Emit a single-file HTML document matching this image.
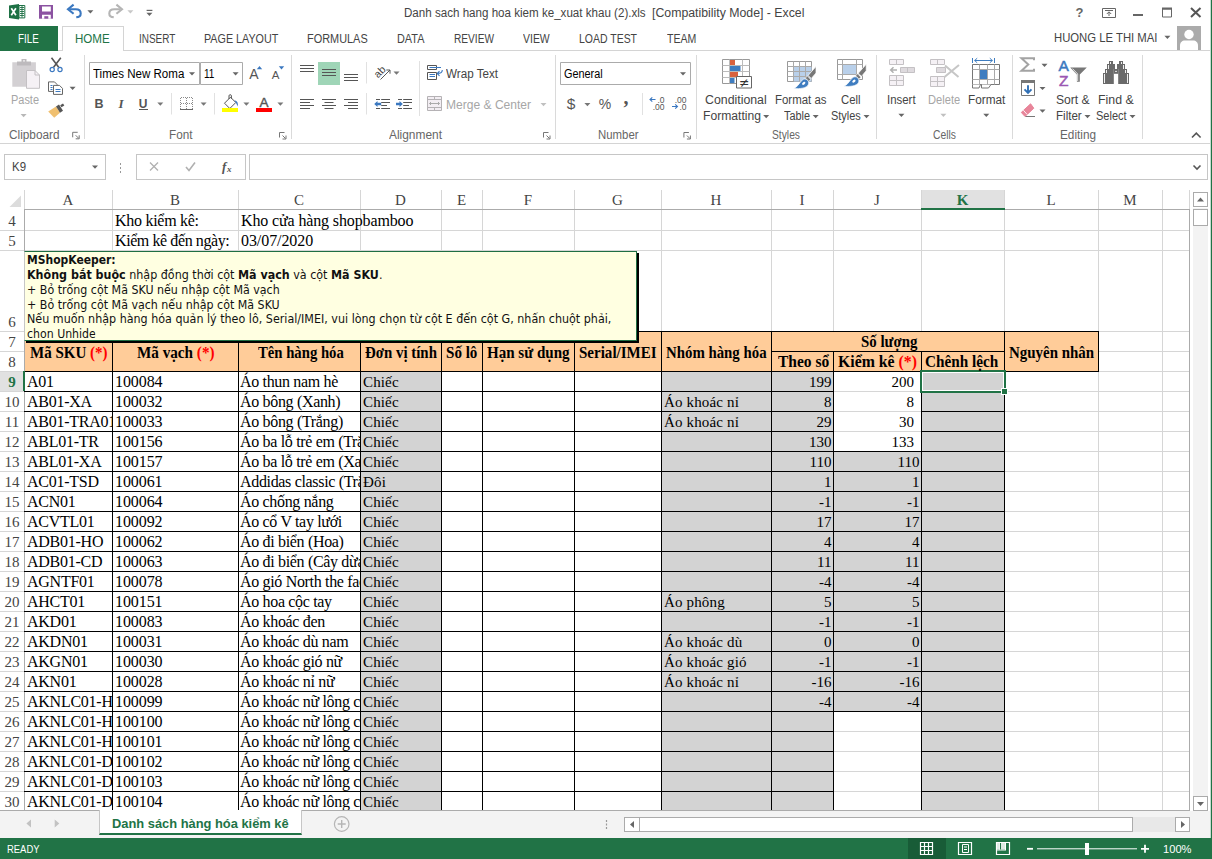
<!DOCTYPE html>
<html><head><meta charset="utf-8">
<style>
*{box-sizing:border-box;margin:0;padding:0}
html,body{width:1212px;height:859px;overflow:hidden;background:#fff}
body{position:relative;font-family:"Liberation Sans",sans-serif;font-size:12px;color:#444}
div,span,svg{position:absolute}
span.i{position:static}
.red{position:static;color:#f00}
b{font-weight:bold}
/* grid */
#grid{left:0;top:0;width:1212px;height:859px}
.ch{font-family:"Liberation Serif",serif;font-size:15px;color:#444;text-align:center;line-height:20px}
.ch.sel{background:#e1e1e1;color:#217346;font-weight:bold}
.rh{font-family:"Liberation Serif",serif;font-size:15px;color:#444;text-align:center;line-height:22px}
.rh.sel{background:#e1e1e1;color:#217346;font-weight:bold}
.vl{width:1px;background:#d6d6d6}
.hl{height:1px;background:#d6d6d6}
.bv{width:1px;background:#000}
.bh{height:1px;background:#000}
.c{font-family:"Liberation Serif",serif;font-size:15px;color:#000;line-height:20px;white-space:nowrap;overflow:hidden}
.c.r{text-align:right}
.c.a{font-size:16px;letter-spacing:-.25px}
.c.b{font-size:16px;letter-spacing:-.08px}
.c.cc{font-size:16px;letter-spacing:-.33px}
.c.n{letter-spacing:.15px}
.c.h{font-weight:bold;text-align:center;line-height:19px}
/* chrome */
.t{white-space:nowrap;transform-origin:0 50%}
.tab{top:27px;height:23px;line-height:24px;font-size:12px;color:#444;white-space:nowrap}
.gl{top:128px;font-size:12px;color:#555;line-height:14px;white-space:nowrap}
.sep{width:1px;background:#e1e1e1;top:55px;height:85px}
.lbl{font-size:12px;color:#444;line-height:14px;text-align:center;white-space:nowrap}
</style></head><body>
<!-- title bar -->
<!-- tabs -->
<div style="left:0;top:50px;width:1211px;height:1px;background:#d4d4d4"></div>
<div style="left:0;top:26px;width:58px;height:25px;background:#217346"></div>
<div style="left:62px;top:26px;width:62px;height:25px;background:#fff;border:1px solid #d4d4d4;border-bottom:none"></div>
<!-- ribbon -->
<div style="left:0;top:143px;width:1211px;height:1px;background:#d4d4d4"></div>
<!-- formula bar -->
<div style="left:4px;top:154px;width:102px;height:26px;border:1px solid #c6c6c6;background:#fff"></div>
<div style="left:136px;top:154px;width:110px;height:26px;border:1px solid #c6c6c6"></div>
<div style="left:249px;top:154px;width:959px;height:26px;border:1px solid #c6c6c6"></div>
<!-- grid -->
<div id="grid">
<div class="ch" style="left:24px;top:190px;width:88px;height:19px;">A</div>
<div class="ch" style="left:112px;top:190px;width:126px;height:19px;">B</div>
<div class="ch" style="left:238px;top:190px;width:122px;height:19px;">C</div>
<div class="ch" style="left:360px;top:190px;width:81px;height:19px;">D</div>
<div class="ch" style="left:441px;top:190px;width:41px;height:19px;">E</div>
<div class="ch" style="left:482px;top:190px;width:92px;height:19px;">F</div>
<div class="ch" style="left:574px;top:190px;width:87px;height:19px;">G</div>
<div class="ch" style="left:661px;top:190px;width:110px;height:19px;">H</div>
<div class="ch" style="left:771px;top:190px;width:62px;height:19px;">I</div>
<div class="ch" style="left:833px;top:190px;width:88px;height:19px;">J</div>
<div class="ch sel" style="left:921px;top:190px;width:83px;height:19px;">K</div>
<div class="ch" style="left:1004px;top:190px;width:94px;height:19px;">L</div>
<div class="ch" style="left:1098px;top:190px;width:64px;height:19px;">M</div>
<div class="rh" style="left:0px;top:210px;width:24px;height:20px;">4</div>
<div class="rh" style="left:0px;top:230px;width:24px;height:20px;">5</div>
<div class="rh" style="left:0;top:250px;width:24px;height:81px;line-height:144px">6</div>
<div class="rh" style="left:0px;top:331px;width:24px;height:20px;">7</div>
<div class="rh" style="left:0px;top:351px;width:24px;height:20px;">8</div>
<div class="rh sel" style="left:0px;top:371px;width:24px;height:20px;">9</div>
<div class="rh" style="left:0px;top:391px;width:24px;height:20px;">10</div>
<div class="rh" style="left:0px;top:411px;width:24px;height:20px;">11</div>
<div class="rh" style="left:0px;top:431px;width:24px;height:20px;">12</div>
<div class="rh" style="left:0px;top:451px;width:24px;height:20px;">13</div>
<div class="rh" style="left:0px;top:471px;width:24px;height:20px;">14</div>
<div class="rh" style="left:0px;top:491px;width:24px;height:20px;">15</div>
<div class="rh" style="left:0px;top:511px;width:24px;height:20px;">16</div>
<div class="rh" style="left:0px;top:531px;width:24px;height:20px;">17</div>
<div class="rh" style="left:0px;top:551px;width:24px;height:20px;">18</div>
<div class="rh" style="left:0px;top:571px;width:24px;height:20px;">19</div>
<div class="rh" style="left:0px;top:591px;width:24px;height:20px;">20</div>
<div class="rh" style="left:0px;top:611px;width:24px;height:20px;">21</div>
<div class="rh" style="left:0px;top:631px;width:24px;height:20px;">22</div>
<div class="rh" style="left:0px;top:651px;width:24px;height:20px;">23</div>
<div class="rh" style="left:0px;top:671px;width:24px;height:20px;">24</div>
<div class="rh" style="left:0px;top:691px;width:24px;height:20px;">25</div>
<div class="rh" style="left:0px;top:711px;width:24px;height:20px;">26</div>
<div class="rh" style="left:0px;top:731px;width:24px;height:20px;">27</div>
<div class="rh" style="left:0px;top:751px;width:24px;height:20px;">28</div>
<div class="rh" style="left:0px;top:771px;width:24px;height:20px;">29</div>
<div class="rh" style="left:0px;top:791px;width:24px;height:20px;">30</div>
<svg width="24" height="20" style="left:0;top:190px"><path d="M21 5.500v11.500h-11.500z" fill="#dcdcdc"/></svg>
<div class="vl" style="left:112px;top:190px;height:621px"></div>
<div class="vl" style="left:238px;top:190px;height:621px"></div>
<div class="vl" style="left:360px;top:190px;height:621px"></div>
<div class="vl" style="left:441px;top:190px;height:621px"></div>
<div class="vl" style="left:482px;top:190px;height:621px"></div>
<div class="vl" style="left:574px;top:190px;height:621px"></div>
<div class="vl" style="left:661px;top:190px;height:621px"></div>
<div class="vl" style="left:771px;top:190px;height:621px"></div>
<div class="vl" style="left:833px;top:190px;height:621px"></div>
<div class="vl" style="left:921px;top:190px;height:621px"></div>
<div class="vl" style="left:1004px;top:190px;height:621px"></div>
<div class="vl" style="left:1098px;top:190px;height:621px"></div>
<div class="vl" style="left:1162px;top:190px;height:621px"></div>
<div class="vl" style="left:1189px;top:190px;height:621px"></div>
<div class="hl" style="left:0;top:230px;width:1189px"></div>
<div class="hl" style="left:0;top:250px;width:1189px"></div>
<div class="hl" style="left:0;top:331px;width:1189px"></div>
<div class="hl" style="left:0;top:351px;width:1189px"></div>
<div class="hl" style="left:0;top:371px;width:1189px"></div>
<div class="hl" style="left:0;top:391px;width:1189px"></div>
<div class="hl" style="left:0;top:411px;width:1189px"></div>
<div class="hl" style="left:0;top:431px;width:1189px"></div>
<div class="hl" style="left:0;top:451px;width:1189px"></div>
<div class="hl" style="left:0;top:471px;width:1189px"></div>
<div class="hl" style="left:0;top:491px;width:1189px"></div>
<div class="hl" style="left:0;top:511px;width:1189px"></div>
<div class="hl" style="left:0;top:531px;width:1189px"></div>
<div class="hl" style="left:0;top:551px;width:1189px"></div>
<div class="hl" style="left:0;top:571px;width:1189px"></div>
<div class="hl" style="left:0;top:591px;width:1189px"></div>
<div class="hl" style="left:0;top:611px;width:1189px"></div>
<div class="hl" style="left:0;top:631px;width:1189px"></div>
<div class="hl" style="left:0;top:651px;width:1189px"></div>
<div class="hl" style="left:0;top:671px;width:1189px"></div>
<div class="hl" style="left:0;top:691px;width:1189px"></div>
<div class="hl" style="left:0;top:711px;width:1189px"></div>
<div class="hl" style="left:0;top:731px;width:1189px"></div>
<div class="hl" style="left:0;top:751px;width:1189px"></div>
<div class="hl" style="left:0;top:771px;width:1189px"></div>
<div class="hl" style="left:0;top:791px;width:1189px"></div>
<div class="hl" style="left:0;top:811px;width:1189px"></div>
<div class="vl" style="left:24px;top:190px;height:20px"></div>
<div class="hl" style="left:24px;top:209px;width:1166px;background:#ababab"></div>
<div class="vl" style="left:24px;top:209px;height:602px;background:#ababab"></div>
<div class="f" style="left:25px;top:332px;width:1073px;height:39px;background:#ffcc99"></div>
<div class="f" style="left:361px;top:372px;width:80px;height:19px;background:#d3d3d3"></div>
<div class="f" style="left:662px;top:372px;width:171px;height:19px;background:#d3d3d3"></div>
<div class="f" style="left:922px;top:372px;width:82px;height:19px;background:#d3d3d3"></div>
<div class="f" style="left:361px;top:392px;width:80px;height:19px;background:#d3d3d3"></div>
<div class="f" style="left:662px;top:392px;width:171px;height:19px;background:#d3d3d3"></div>
<div class="f" style="left:922px;top:392px;width:82px;height:19px;background:#d3d3d3"></div>
<div class="f" style="left:361px;top:412px;width:80px;height:19px;background:#d3d3d3"></div>
<div class="f" style="left:662px;top:412px;width:171px;height:19px;background:#d3d3d3"></div>
<div class="f" style="left:922px;top:412px;width:82px;height:19px;background:#d3d3d3"></div>
<div class="f" style="left:361px;top:432px;width:80px;height:19px;background:#d3d3d3"></div>
<div class="f" style="left:662px;top:432px;width:171px;height:19px;background:#d3d3d3"></div>
<div class="f" style="left:922px;top:432px;width:82px;height:19px;background:#d3d3d3"></div>
<div class="f" style="left:361px;top:452px;width:80px;height:19px;background:#d3d3d3"></div>
<div class="f" style="left:662px;top:452px;width:171px;height:19px;background:#d3d3d3"></div>
<div class="f" style="left:922px;top:452px;width:82px;height:19px;background:#d3d3d3"></div>
<div class="f" style="left:834px;top:452px;width:87px;height:19px;background:#d3d3d3"></div>
<div class="f" style="left:361px;top:472px;width:80px;height:19px;background:#d3d3d3"></div>
<div class="f" style="left:662px;top:472px;width:171px;height:19px;background:#d3d3d3"></div>
<div class="f" style="left:922px;top:472px;width:82px;height:19px;background:#d3d3d3"></div>
<div class="f" style="left:834px;top:472px;width:87px;height:19px;background:#d3d3d3"></div>
<div class="f" style="left:361px;top:492px;width:80px;height:19px;background:#d3d3d3"></div>
<div class="f" style="left:662px;top:492px;width:171px;height:19px;background:#d3d3d3"></div>
<div class="f" style="left:922px;top:492px;width:82px;height:19px;background:#d3d3d3"></div>
<div class="f" style="left:834px;top:492px;width:87px;height:19px;background:#d3d3d3"></div>
<div class="f" style="left:361px;top:512px;width:80px;height:19px;background:#d3d3d3"></div>
<div class="f" style="left:662px;top:512px;width:171px;height:19px;background:#d3d3d3"></div>
<div class="f" style="left:922px;top:512px;width:82px;height:19px;background:#d3d3d3"></div>
<div class="f" style="left:834px;top:512px;width:87px;height:19px;background:#d3d3d3"></div>
<div class="f" style="left:361px;top:532px;width:80px;height:19px;background:#d3d3d3"></div>
<div class="f" style="left:662px;top:532px;width:171px;height:19px;background:#d3d3d3"></div>
<div class="f" style="left:922px;top:532px;width:82px;height:19px;background:#d3d3d3"></div>
<div class="f" style="left:834px;top:532px;width:87px;height:19px;background:#d3d3d3"></div>
<div class="f" style="left:361px;top:552px;width:80px;height:19px;background:#d3d3d3"></div>
<div class="f" style="left:662px;top:552px;width:171px;height:19px;background:#d3d3d3"></div>
<div class="f" style="left:922px;top:552px;width:82px;height:19px;background:#d3d3d3"></div>
<div class="f" style="left:834px;top:552px;width:87px;height:19px;background:#d3d3d3"></div>
<div class="f" style="left:361px;top:572px;width:80px;height:19px;background:#d3d3d3"></div>
<div class="f" style="left:662px;top:572px;width:171px;height:19px;background:#d3d3d3"></div>
<div class="f" style="left:922px;top:572px;width:82px;height:19px;background:#d3d3d3"></div>
<div class="f" style="left:834px;top:572px;width:87px;height:19px;background:#d3d3d3"></div>
<div class="f" style="left:361px;top:592px;width:80px;height:19px;background:#d3d3d3"></div>
<div class="f" style="left:662px;top:592px;width:171px;height:19px;background:#d3d3d3"></div>
<div class="f" style="left:922px;top:592px;width:82px;height:19px;background:#d3d3d3"></div>
<div class="f" style="left:834px;top:592px;width:87px;height:19px;background:#d3d3d3"></div>
<div class="f" style="left:361px;top:612px;width:80px;height:19px;background:#d3d3d3"></div>
<div class="f" style="left:662px;top:612px;width:171px;height:19px;background:#d3d3d3"></div>
<div class="f" style="left:922px;top:612px;width:82px;height:19px;background:#d3d3d3"></div>
<div class="f" style="left:834px;top:612px;width:87px;height:19px;background:#d3d3d3"></div>
<div class="f" style="left:361px;top:632px;width:80px;height:19px;background:#d3d3d3"></div>
<div class="f" style="left:662px;top:632px;width:171px;height:19px;background:#d3d3d3"></div>
<div class="f" style="left:922px;top:632px;width:82px;height:19px;background:#d3d3d3"></div>
<div class="f" style="left:834px;top:632px;width:87px;height:19px;background:#d3d3d3"></div>
<div class="f" style="left:361px;top:652px;width:80px;height:19px;background:#d3d3d3"></div>
<div class="f" style="left:662px;top:652px;width:171px;height:19px;background:#d3d3d3"></div>
<div class="f" style="left:922px;top:652px;width:82px;height:19px;background:#d3d3d3"></div>
<div class="f" style="left:834px;top:652px;width:87px;height:19px;background:#d3d3d3"></div>
<div class="f" style="left:361px;top:672px;width:80px;height:19px;background:#d3d3d3"></div>
<div class="f" style="left:662px;top:672px;width:171px;height:19px;background:#d3d3d3"></div>
<div class="f" style="left:922px;top:672px;width:82px;height:19px;background:#d3d3d3"></div>
<div class="f" style="left:834px;top:672px;width:87px;height:19px;background:#d3d3d3"></div>
<div class="f" style="left:361px;top:692px;width:80px;height:19px;background:#d3d3d3"></div>
<div class="f" style="left:662px;top:692px;width:171px;height:19px;background:#d3d3d3"></div>
<div class="f" style="left:922px;top:692px;width:82px;height:19px;background:#d3d3d3"></div>
<div class="f" style="left:834px;top:692px;width:87px;height:19px;background:#d3d3d3"></div>
<div class="f" style="left:361px;top:712px;width:80px;height:19px;background:#d3d3d3"></div>
<div class="f" style="left:662px;top:712px;width:171px;height:19px;background:#d3d3d3"></div>
<div class="f" style="left:922px;top:712px;width:82px;height:19px;background:#d3d3d3"></div>
<div class="f" style="left:361px;top:732px;width:80px;height:19px;background:#d3d3d3"></div>
<div class="f" style="left:662px;top:732px;width:171px;height:19px;background:#d3d3d3"></div>
<div class="f" style="left:922px;top:732px;width:82px;height:19px;background:#d3d3d3"></div>
<div class="f" style="left:361px;top:752px;width:80px;height:19px;background:#d3d3d3"></div>
<div class="f" style="left:662px;top:752px;width:171px;height:19px;background:#d3d3d3"></div>
<div class="f" style="left:922px;top:752px;width:82px;height:19px;background:#d3d3d3"></div>
<div class="f" style="left:361px;top:772px;width:80px;height:19px;background:#d3d3d3"></div>
<div class="f" style="left:662px;top:772px;width:171px;height:19px;background:#d3d3d3"></div>
<div class="f" style="left:922px;top:772px;width:82px;height:19px;background:#d3d3d3"></div>
<div class="f" style="left:361px;top:792px;width:80px;height:19px;background:#d3d3d3"></div>
<div class="f" style="left:662px;top:792px;width:171px;height:19px;background:#d3d3d3"></div>
<div class="f" style="left:922px;top:792px;width:82px;height:19px;background:#d3d3d3"></div>
<div class="bh" style="left:24px;top:331px;width:1075px"></div>
<div class="bh" style="left:24px;top:371px;width:1075px"></div>
<div class="bv" style="left:112px;top:331px;height:40px"></div>
<div class="bv" style="left:238px;top:331px;height:40px"></div>
<div class="bv" style="left:360px;top:331px;height:40px"></div>
<div class="bv" style="left:441px;top:331px;height:40px"></div>
<div class="bv" style="left:482px;top:331px;height:40px"></div>
<div class="bv" style="left:574px;top:331px;height:40px"></div>
<div class="bv" style="left:661px;top:331px;height:40px"></div>
<div class="bv" style="left:771px;top:331px;height:40px"></div>
<div class="bv" style="left:1004px;top:331px;height:40px"></div>
<div class="bv" style="left:1098px;top:331px;height:40px"></div>
<div class="bv" style="left:833px;top:351px;height:20px"></div>
<div class="bv" style="left:921px;top:351px;height:20px"></div>
<div class="bh" style="left:771px;top:351px;width:233px"></div>
<div class="bv" style="left:112px;top:371px;height:440px"></div>
<div class="bv" style="left:238px;top:371px;height:440px"></div>
<div class="bv" style="left:360px;top:371px;height:440px"></div>
<div class="bv" style="left:441px;top:371px;height:440px"></div>
<div class="bv" style="left:482px;top:371px;height:440px"></div>
<div class="bv" style="left:574px;top:371px;height:440px"></div>
<div class="bv" style="left:661px;top:371px;height:440px"></div>
<div class="bv" style="left:771px;top:371px;height:440px"></div>
<div class="bv" style="left:833px;top:371px;height:440px"></div>
<div class="bv" style="left:921px;top:371px;height:440px"></div>
<div class="bv" style="left:1004px;top:371px;height:440px"></div>
<div class="bh" style="left:24px;top:391px;width:810px"></div>
<div class="bh" style="left:921px;top:391px;width:84px"></div>
<div class="bh" style="left:24px;top:411px;width:810px"></div>
<div class="bh" style="left:921px;top:411px;width:84px"></div>
<div class="bh" style="left:24px;top:431px;width:810px"></div>
<div class="bh" style="left:921px;top:431px;width:84px"></div>
<div class="bh" style="left:24px;top:451px;width:981px"></div>
<div class="bh" style="left:24px;top:471px;width:981px"></div>
<div class="bh" style="left:24px;top:491px;width:981px"></div>
<div class="bh" style="left:24px;top:511px;width:981px"></div>
<div class="bh" style="left:24px;top:531px;width:981px"></div>
<div class="bh" style="left:24px;top:551px;width:981px"></div>
<div class="bh" style="left:24px;top:571px;width:981px"></div>
<div class="bh" style="left:24px;top:591px;width:981px"></div>
<div class="bh" style="left:24px;top:611px;width:981px"></div>
<div class="bh" style="left:24px;top:631px;width:981px"></div>
<div class="bh" style="left:24px;top:651px;width:981px"></div>
<div class="bh" style="left:24px;top:671px;width:981px"></div>
<div class="bh" style="left:24px;top:691px;width:981px"></div>
<div class="bh" style="left:24px;top:711px;width:981px"></div>
<div class="bh" style="left:24px;top:731px;width:810px"></div>
<div class="bh" style="left:921px;top:731px;width:84px"></div>
<div class="bh" style="left:24px;top:751px;width:810px"></div>
<div class="bh" style="left:921px;top:751px;width:84px"></div>
<div class="bh" style="left:24px;top:771px;width:810px"></div>
<div class="bh" style="left:921px;top:771px;width:84px"></div>
<div class="bh" style="left:24px;top:791px;width:810px"></div>
<div class="bh" style="left:921px;top:791px;width:84px"></div>
<div class="bh" style="left:24px;top:811px;width:810px"></div>
<div class="bh" style="left:921px;top:811px;width:84px"></div>
<div style="left:23px;top:371px;width:2px;height:20px;background:#217346"></div>
<div style="left:921px;top:208px;width:84px;height:2px;background:#217346"></div>
<div class="c b" style="left:115px;top:211px;width:245px;height:19px;letter-spacing:-.28px">Kho kiểm kê:</div>
<div class="c b" style="left:241px;top:211px;width:359px;height:19px;letter-spacing:-.13px">Kho cửa hàng shopbamboo</div>
<div class="c b" style="left:115px;top:231px;width:245px;height:19px;letter-spacing:-.41px">Kiểm kê đến ngày:</div>
<div class="c b" style="left:241px;top:231px;width:119px;height:19px;">03/07/2020</div>
<div class="c a" style="left:27px;top:372px;width:85px;height:19px;">A01</div>
<div class="c b" style="left:115px;top:372px;width:123px;height:19px;">100084</div>
<div class="c cc" style="left:240px;top:372px;width:120px;height:19px;">Áo thun nam hè</div>
<div class="c n" style="left:363px;top:372px;width:78px;height:19px;">Chiếc</div>
<div class="c r" style="left:772px;top:372px;width:59.5px;height:19px;">199</div>
<div class="c r" style="left:834px;top:372px;width:80px;height:19px;">200</div>
<div class="c a" style="left:27px;top:392px;width:85px;height:19px;">AB01-XA</div>
<div class="c b" style="left:115px;top:392px;width:123px;height:19px;">100032</div>
<div class="c cc" style="left:240px;top:392px;width:120px;height:19px;">Áo bông (Xanh)</div>
<div class="c n" style="left:363px;top:392px;width:78px;height:19px;">Chiếc</div>
<div class="c n" style="left:664px;top:392px;width:107px;height:19px;">Áo khoác nỉ</div>
<div class="c r" style="left:772px;top:392px;width:59.5px;height:19px;">8</div>
<div class="c r" style="left:834px;top:392px;width:80px;height:19px;">8</div>
<div class="c a" style="left:27px;top:412px;width:85px;height:19px;">AB01-TRA01</div>
<div class="c b" style="left:115px;top:412px;width:123px;height:19px;">100033</div>
<div class="c cc" style="left:240px;top:412px;width:120px;height:19px;">Áo bông (Trắng)</div>
<div class="c n" style="left:363px;top:412px;width:78px;height:19px;">Chiếc</div>
<div class="c n" style="left:664px;top:412px;width:107px;height:19px;">Áo khoác nỉ</div>
<div class="c r" style="left:772px;top:412px;width:59.5px;height:19px;">29</div>
<div class="c r" style="left:834px;top:412px;width:80px;height:19px;">30</div>
<div class="c a" style="left:27px;top:432px;width:85px;height:19px;">ABL01-TR</div>
<div class="c b" style="left:115px;top:432px;width:123px;height:19px;">100156</div>
<div class="c cc" style="left:240px;top:432px;width:120px;height:19px;">Áo ba lỗ trẻ em (Trắng)</div>
<div class="c n" style="left:363px;top:432px;width:78px;height:19px;">Chiếc</div>
<div class="c r" style="left:772px;top:432px;width:59.5px;height:19px;">130</div>
<div class="c r" style="left:834px;top:432px;width:80px;height:19px;">133</div>
<div class="c a" style="left:27px;top:452px;width:85px;height:19px;">ABL01-XA</div>
<div class="c b" style="left:115px;top:452px;width:123px;height:19px;">100157</div>
<div class="c cc" style="left:240px;top:452px;width:120px;height:19px;">Áo ba lỗ trẻ em (Xanh)</div>
<div class="c n" style="left:363px;top:452px;width:78px;height:19px;">Chiếc</div>
<div class="c r" style="left:772px;top:452px;width:59.5px;height:19px;">110</div>
<div class="c r" style="left:834px;top:452px;width:85.5px;height:19px;">110</div>
<div class="c a" style="left:27px;top:472px;width:85px;height:19px;">AC01-TSD</div>
<div class="c b" style="left:115px;top:472px;width:123px;height:19px;">100061</div>
<div class="c cc" style="left:240px;top:472px;width:120px;height:19px;">Addidas classic (Trắng)</div>
<div class="c n" style="left:363px;top:472px;width:78px;height:19px;">Đôi</div>
<div class="c r" style="left:772px;top:472px;width:59.5px;height:19px;">1</div>
<div class="c r" style="left:834px;top:472px;width:85.5px;height:19px;">1</div>
<div class="c a" style="left:27px;top:492px;width:85px;height:19px;">ACN01</div>
<div class="c b" style="left:115px;top:492px;width:123px;height:19px;">100064</div>
<div class="c cc" style="left:240px;top:492px;width:120px;height:19px;">Áo chống nắng</div>
<div class="c n" style="left:363px;top:492px;width:78px;height:19px;">Chiếc</div>
<div class="c r" style="left:772px;top:492px;width:59.5px;height:19px;">-1</div>
<div class="c r" style="left:834px;top:492px;width:85.5px;height:19px;">-1</div>
<div class="c a" style="left:27px;top:512px;width:85px;height:19px;">ACVTL01</div>
<div class="c b" style="left:115px;top:512px;width:123px;height:19px;">100092</div>
<div class="c cc" style="left:240px;top:512px;width:120px;height:19px;">Áo cổ V tay lưới</div>
<div class="c n" style="left:363px;top:512px;width:78px;height:19px;">Chiếc</div>
<div class="c r" style="left:772px;top:512px;width:59.5px;height:19px;">17</div>
<div class="c r" style="left:834px;top:512px;width:85.5px;height:19px;">17</div>
<div class="c a" style="left:27px;top:532px;width:85px;height:19px;">ADB01-HO</div>
<div class="c b" style="left:115px;top:532px;width:123px;height:19px;">100062</div>
<div class="c cc" style="left:240px;top:532px;width:120px;height:19px;">Áo đi biển (Hoa)</div>
<div class="c n" style="left:363px;top:532px;width:78px;height:19px;">Chiếc</div>
<div class="c r" style="left:772px;top:532px;width:59.5px;height:19px;">4</div>
<div class="c r" style="left:834px;top:532px;width:85.5px;height:19px;">4</div>
<div class="c a" style="left:27px;top:552px;width:85px;height:19px;">ADB01-CD</div>
<div class="c b" style="left:115px;top:552px;width:123px;height:19px;">100063</div>
<div class="c cc" style="left:240px;top:552px;width:120px;height:19px;">Áo đi biển (Cây dừa)</div>
<div class="c n" style="left:363px;top:552px;width:78px;height:19px;">Chiếc</div>
<div class="c r" style="left:772px;top:552px;width:59.5px;height:19px;">11</div>
<div class="c r" style="left:834px;top:552px;width:85.5px;height:19px;">11</div>
<div class="c a" style="left:27px;top:572px;width:85px;height:19px;">AGNTF01</div>
<div class="c b" style="left:115px;top:572px;width:123px;height:19px;">100078</div>
<div class="c cc" style="left:240px;top:572px;width:120px;height:19px;">Áo gió North the face</div>
<div class="c n" style="left:363px;top:572px;width:78px;height:19px;">Chiếc</div>
<div class="c r" style="left:772px;top:572px;width:59.5px;height:19px;">-4</div>
<div class="c r" style="left:834px;top:572px;width:85.5px;height:19px;">-4</div>
<div class="c a" style="left:27px;top:592px;width:85px;height:19px;">AHCT01</div>
<div class="c b" style="left:115px;top:592px;width:123px;height:19px;">100151</div>
<div class="c cc" style="left:240px;top:592px;width:120px;height:19px;">Áo hoa cộc tay</div>
<div class="c n" style="left:363px;top:592px;width:78px;height:19px;">Chiếc</div>
<div class="c n" style="left:664px;top:592px;width:107px;height:19px;">Áo phông</div>
<div class="c r" style="left:772px;top:592px;width:59.5px;height:19px;">5</div>
<div class="c r" style="left:834px;top:592px;width:85.5px;height:19px;">5</div>
<div class="c a" style="left:27px;top:612px;width:85px;height:19px;">AKD01</div>
<div class="c b" style="left:115px;top:612px;width:123px;height:19px;">100083</div>
<div class="c cc" style="left:240px;top:612px;width:120px;height:19px;">Áo khoác đen</div>
<div class="c n" style="left:363px;top:612px;width:78px;height:19px;">Chiếc</div>
<div class="c r" style="left:772px;top:612px;width:59.5px;height:19px;">-1</div>
<div class="c r" style="left:834px;top:612px;width:85.5px;height:19px;">-1</div>
<div class="c a" style="left:27px;top:632px;width:85px;height:19px;">AKDN01</div>
<div class="c b" style="left:115px;top:632px;width:123px;height:19px;">100031</div>
<div class="c cc" style="left:240px;top:632px;width:120px;height:19px;">Áo khoác dù nam</div>
<div class="c n" style="left:363px;top:632px;width:78px;height:19px;">Chiếc</div>
<div class="c n" style="left:664px;top:632px;width:107px;height:19px;">Áo khoác dù</div>
<div class="c r" style="left:772px;top:632px;width:59.5px;height:19px;">0</div>
<div class="c r" style="left:834px;top:632px;width:85.5px;height:19px;">0</div>
<div class="c a" style="left:27px;top:652px;width:85px;height:19px;">AKGN01</div>
<div class="c b" style="left:115px;top:652px;width:123px;height:19px;">100030</div>
<div class="c cc" style="left:240px;top:652px;width:120px;height:19px;">Áo khoác gió nữ</div>
<div class="c n" style="left:363px;top:652px;width:78px;height:19px;">Chiếc</div>
<div class="c n" style="left:664px;top:652px;width:107px;height:19px;">Áo khoác gió</div>
<div class="c r" style="left:772px;top:652px;width:59.5px;height:19px;">-1</div>
<div class="c r" style="left:834px;top:652px;width:85.5px;height:19px;">-1</div>
<div class="c a" style="left:27px;top:672px;width:85px;height:19px;">AKN01</div>
<div class="c b" style="left:115px;top:672px;width:123px;height:19px;">100028</div>
<div class="c cc" style="left:240px;top:672px;width:120px;height:19px;">Áo khoác nỉ nữ</div>
<div class="c n" style="left:363px;top:672px;width:78px;height:19px;">Chiếc</div>
<div class="c n" style="left:664px;top:672px;width:107px;height:19px;">Áo khoác nỉ</div>
<div class="c r" style="left:772px;top:672px;width:59.5px;height:19px;">-16</div>
<div class="c r" style="left:834px;top:672px;width:85.5px;height:19px;">-16</div>
<div class="c a" style="left:27px;top:692px;width:85px;height:19px;">AKNLC01-HO</div>
<div class="c b" style="left:115px;top:692px;width:123px;height:19px;">100099</div>
<div class="c cc" style="left:240px;top:692px;width:120px;height:19px;">Áo khoác nữ lông cừu</div>
<div class="c n" style="left:363px;top:692px;width:78px;height:19px;">Chiếc</div>
<div class="c r" style="left:772px;top:692px;width:59.5px;height:19px;">-4</div>
<div class="c r" style="left:834px;top:692px;width:85.5px;height:19px;">-4</div>
<div class="c a" style="left:27px;top:712px;width:85px;height:19px;">AKNLC01-HO</div>
<div class="c b" style="left:115px;top:712px;width:123px;height:19px;">100100</div>
<div class="c cc" style="left:240px;top:712px;width:120px;height:19px;">Áo khoác nữ lông cừu</div>
<div class="c n" style="left:363px;top:712px;width:78px;height:19px;">Chiếc</div>
<div class="c a" style="left:27px;top:732px;width:85px;height:19px;">AKNLC01-HO</div>
<div class="c b" style="left:115px;top:732px;width:123px;height:19px;">100101</div>
<div class="c cc" style="left:240px;top:732px;width:120px;height:19px;">Áo khoác nữ lông cừu</div>
<div class="c n" style="left:363px;top:732px;width:78px;height:19px;">Chiếc</div>
<div class="c a" style="left:27px;top:752px;width:85px;height:19px;">AKNLC01-DO</div>
<div class="c b" style="left:115px;top:752px;width:123px;height:19px;">100102</div>
<div class="c cc" style="left:240px;top:752px;width:120px;height:19px;">Áo khoác nữ lông cừu</div>
<div class="c n" style="left:363px;top:752px;width:78px;height:19px;">Chiếc</div>
<div class="c a" style="left:27px;top:772px;width:85px;height:19px;">AKNLC01-DO</div>
<div class="c b" style="left:115px;top:772px;width:123px;height:19px;">100103</div>
<div class="c cc" style="left:240px;top:772px;width:120px;height:19px;">Áo khoác nữ lông cừu</div>
<div class="c n" style="left:363px;top:772px;width:78px;height:19px;">Chiếc</div>
<div class="c a" style="left:27px;top:792px;width:85px;height:19px;">AKNLC01-DO</div>
<div class="c b" style="left:115px;top:792px;width:123px;height:19px;">100104</div>
<div class="c cc" style="left:240px;top:792px;width:120px;height:19px;">Áo khoác nữ lông cừu</div>
<div class="c n" style="left:363px;top:792px;width:78px;height:19px;">Chiếc</div>
</div>
<!-- sheet tabs -->
<div style="left:0;top:810px;width:1211px;height:28px;background:#f3f3f3"></div>
<div style="left:0;top:810px;width:1190px;height:1px;background:#ababab"></div>
<div style="left:99px;top:810px;width:203px;height:25px;background:#fff;border-left:1px solid #c6c6c6;border-right:1px solid #c6c6c6;border-bottom:2px solid #217346"></div>
<!-- status bar -->
<div style="left:0;top:838px;width:1212px;height:21px;background:#217346"></div>
<!-- comment box -->
<div style="left:24px;top:251px;width:613px;height:90px;background:#ffffe1;border:1px solid #1f6e43;border-left-color:#c6c6c6;box-shadow:2px 2px 0 0 #000"></div>
<!--CMTEXT-->
<!-- selection K9 -->
<div style="left:920px;top:370px;width:86px;height:23px;border:2px solid #217346;box-shadow:inset 0 0 0 1px #fff"></div>
<div style="left:1001px;top:388px;width:7px;height:7px;background:#217346;border:1px solid #fff"></div>
<!-- vertical scrollbar -->
<div style="left:1189px;top:209px;width:1px;height:602px;background:#ababab"></div>
<div style="left:1190px;top:186px;width:21px;height:625px;background:#fff"></div>
<div style="left:1193px;top:208px;width:15px;height:589px;background:#f3f3f3"></div>
<div style="left:1193px;top:192px;width:15px;height:15px;background:#fff;border:1px solid #ababab"></div>
<div style="left:1193px;top:209px;width:15px;height:17px;background:#fff;border:1px solid #ababab"></div>
<div style="left:1193px;top:796px;width:15px;height:15px;background:#fff;border:1px solid #ababab"></div>
<svg width="15" height="15" style="left:1193px;top:192px"><path d="M4 9.500h7l-3.500-4z" fill="#666"/></svg>
<svg width="15" height="15" style="left:1193px;top:796px"><path d="M4 6h7l-3.500 4z" fill="#666"/></svg>
<!-- sheet tab nav -->
<svg width="400" height="27" style="left:0;top:811px"><path d="M31 8.500v8l-4.600-4zM54.700 8.500v8l4.600-4z" fill="#c2c2c2"/><circle cx="341.700" cy="13" r="7.300" fill="none" stroke="#b5b5b5" stroke-width="1.200"/><path d="M337.700 13h8M341.700 9v8" stroke="#b5b5b5" stroke-width="1.400"/></svg>
<!-- horizontal scrollbar -->
<svg width="20" height="27" style="left:600px;top:811px"><path d="M6.500 9v2M6.500 12.500v2M6.500 16v2" stroke="#999" stroke-width="1.200"/></svg>
<div style="left:624px;top:817px;width:566px;height:15px;background:#e8e8e8"></div>
<div style="left:624px;top:817px;width:16px;height:15px;background:#fff;border:1px solid #ababab"></div>
<div style="left:639px;top:817px;width:494px;height:15px;background:#fff;border:1px solid #ababab"></div>
<div style="left:1175px;top:817px;width:15px;height:15px;background:#fff;border:1px solid #ababab"></div>
<svg width="16" height="15" style="left:624px;top:817px"><path d="M10 4v7l-4-3.500z" fill="#666"/></svg>
<svg width="15" height="15" style="left:1175px;top:817px"><path d="M6 4v7l4-3.500z" fill="#666"/></svg>
<!-- status bar icons -->
<div style="left:908px;top:838px;width:38px;height:21px;background:#185c37"></div>
<svg width="260" height="21" style="left:900px;top:838px">
<g stroke="#fff" fill="none">
<path d="M20.500 4.500h12v12h-12zM24.500 4.500v12M28.500 4.500v12M20.500 8.500h12M20.500 12.500h12" stroke-width="1.200"/>
<path d="M58.500 4.500h13v12h-13z" stroke-width="1.200"/><path d="M62.500 6.500h6v8h-6zM64 9h3M64 11.500h3" stroke-width="1"/>
<path d="M96.500 4.500h13v12h-13z" stroke-width="1.200"/><path d="M100 5v7M105.500 5v7M97 12h9" stroke-width="1"/>
<path d="M127 10.800h6" stroke-width="1.800"/><path d="M137 10.800h100" stroke-width="1"/><path d="M241 10.800h8M245 6.800v8" stroke-width="1.800"/>
</g>
<path d="M97 5h8.500v6.500h-8.500z" fill="#fff" opacity="0.850"/><path d="M100.500 5v6.500" stroke="#217346"/>
<path d="M185 5h4v12h-4z" fill="#fff"/>
</svg>

<svg width="1212" height="190" viewBox="0 0 1212 190" style="left:0;top:0"><path d="M9 5.6L19 4v15.6L9 18z" fill="#1e7145"/>
<path d="M19 5.5h5.8v12.4H19z" fill="#fff" stroke="#1e7145" stroke-width="1"/>
<path d="M20 7.5h4M20 9.5h4M20 11.5h4M20 13.5h4M20 15.5h4M22 6v11.5" stroke="#1e7145" stroke-width="0.9" fill="none"/>
<path d="M11.3 8.3l4.6 7M15.9 8.3l-4.6 7" stroke="#fff" stroke-width="1.7" fill="none"/>
<path d="M39 5h14v13.7H39z" fill="#8b52a1"/>
<path d="M42 6.4h8.8v5.2H42zM42 14.8h8.8v3.9H42z" fill="#fff"/>
<path d="M44.3 16.2h4v2.5h-4z" fill="#8b52a1"/>
<path d="M69.5 9.2h6.2c3 0 5 1.7 5 4.2 0 2.3-1.8 3.7-4.4 3.7" fill="none" stroke="#3b78c0" stroke-width="2.1"/>
<path d="M73.6 4.6l-5.6 4.6 5.6 4.6" fill="none" stroke="#3b78c0" stroke-width="2.1"/>
<path d="M87.4 10.3h6l-3 3.2z" fill="#666"/>
<path d="M120.5 9.2h-6.2c-3 0-5 1.7-5 4.2 0 2.3 1.8 3.7 4.4 3.7" fill="none" stroke="#b5b5b5" stroke-width="2.1"/>
<path d="M116.4 4.6l5.6 4.6-5.6 4.6" fill="none" stroke="#b5b5b5" stroke-width="2.1"/>
<path d="M127.4 10.3h6l-3 3.2z" fill="#c8c8c8"/>
<path d="M146.6 10.4H152.4" stroke="#666" stroke-width="1.2"/>
<path d="M146.4 12.8h6l-3 3.2z" fill="#666"/>
<text x="1079.5" y="16.800" font-family="Liberation Sans,sans-serif" font-size="13" font-weight="bold" fill="#666" text-anchor="middle">?</text>
<path d="M1102.5 8.5h13v9h-13z" fill="none" stroke="#666"/><path d="M1105 10.5h8" stroke="#666"/><path d="M1109 16v-4M1106.8 14l2.2-2.2 2.2 2.2" stroke="#666" fill="none"/>
<path d="M1133 15H1143" stroke="#666" stroke-width="2"/>
<path d="M1162.5 9h9v8h-9z" fill="none" stroke="#666" stroke-width="1"/><path d="M1162 8.5h10" stroke="#666" stroke-width="2"/>
<path d="M1191 8l9.5 9M1200.5 8l-9.5 9" stroke="#555" stroke-width="2"/>
<path d="M1164.4 35.8h6l-3 3.2z" fill="#666"/>
<path d="M1177 26h24v24h-24z" fill="#ababab"/>
<circle cx="1189" cy="34.5" r="4.7" fill="#fff"/><path d="M1180 50v-4.5c0-3 2-5 5-5h8c3 0 5 2 5 5V50z" fill="#fff"/>
<path d="M12.300 62.200h23.600v24.600h-23.600z" fill="#d3d0d3"/><path d="M17 61.500h14v4h-14z" fill="#bdbabd"/><path d="M21.500 59h5v3.500h-5z" fill="#bdbabd"/><path d="M23.200 60.300h1.600v1.300h-1.600z" fill="#fff"/>
<path d="M26.500 70.500h8.500l4.500 4.500v13.300h-13z" fill="#f5f1f5" stroke="#c4c1c4"/><path d="M35 70.500v4.500h4.500" fill="none" stroke="#c4c1c4"/>
<path d="M20.6 114.0h6l-3 3.2z" fill="#b8b8b8"/>
<path d="M51.5 57.8l7.2 9.5M60.8 57.8l-7.2 9.5" stroke="#555" stroke-width="1.6" fill="none"/>
<circle cx="52.2" cy="69.5" r="2.1" fill="none" stroke="#3b78c0" stroke-width="1.2"/><circle cx="60" cy="69.5" r="2.1" fill="none" stroke="#3b78c0" stroke-width="1.2"/>
<path d="M48.5 81.9h6l2.5 2.5v7h-8.5z" fill="#fff" stroke="#666"/><path d="M53.5 85.4h6l3 3v6h-9z" fill="#fff" stroke="#666"/>
<path d="M50.5 85.5h2M50.5 87.5h2M50.5 89.5h2M55.5 89.5h5M55.5 91.5h5" stroke="#3b78c0" stroke-width="1"/>
<path d="M69.6 86.8h6l-3 3.2z" fill="#666"/>
<path d="M48.2 111.5l7.8-5 4 6.2-5.8 5z" fill="#f0c070"/><path d="M56 106.5l3-2 4 6.2-3 2z" fill="#555"/><path d="M60.2 105.2l2.8-1.8 1.3 2-2.8 1.8z" fill="#555"/>
<path d="M72.7 137.3v-5h5M75.7 135.3l3 3M79.2 135.3v3.5h-3.5" fill="none" stroke="#777" stroke-width="1"/>
<path d="M89.5 62.5h110v22h-110zM200.500 62.5h42v22h-42z" fill="#fff" stroke="#ababab"/>
<path d="M189 72.3h6l-3 3.2z" fill="#666"/>
<path d="M232.6 72.3h6l-3 3.2z" fill="#666"/>
<text x="254" y="79" font-family="Liberation Sans,sans-serif" font-size="14" fill="#555" text-anchor="middle">A</text>
<path d="M256.800 69.300l2.700-3.200 2.700 3.200z" fill="#3b78c0"/>
<text x="275.5" y="79" font-family="Liberation Sans,sans-serif" font-size="11.5" fill="#555" text-anchor="middle">A</text>
<path d="M278.800 66.300h5.400l-2.700 3.200z" fill="#3b78c0"/>
<text x="99" y="108" font-family="Liberation Sans,sans-serif" font-size="12.5" font-weight="bold" fill="#555" text-anchor="middle">B</text>
<text x="121" y="108" font-family="Liberation Serif,serif" font-size="13" font-weight="bold" font-style="italic" fill="#555" text-anchor="middle">I</text>
<text x="143" y="107.5" font-family="Liberation Sans,sans-serif" font-size="12" font-weight="bold" fill="#555" text-anchor="middle">U</text>
<path d="M139 109.5H148" stroke="#555" stroke-width="1"/>
<path d="M157.3 102.5h6l-3 3.2z" fill="#777"/>
<path d="M171.5 93v21.5M214.5 93v21.5" stroke="#e1e1e1"/>
<path d="M180.5 97.5h12M180.5 103.5h12M180.5 97.5v12M186.5 97.5v12M192.5 97.5v12" stroke="#8a8a8a" stroke-dasharray="1 1" shape-rendering="crispEdges" fill="none"/>
<path d="M180 109.5H193" stroke="#666" stroke-width="1"/>
<path d="M200.6 102.5h6l-3 3.2z" fill="#777"/>
<path d="M224.5 103.2l6-6 5.3 5.3-6 6z" fill="#fff" stroke="#555" stroke-width="1"/><path d="M229 99v-3.2c0-1.5 2.4-1.5 2.4 0v3" fill="none" stroke="#555" stroke-width="1"/>
<path d="M234.500 100.200c2.800 0.600 4 2.800 3.200 6.200-1-2.400-2-3.800-3.200-6.200z" fill="#3b78c0"/>
<path d="M222 108h16v4h-16z" fill="#ffff00"/>
<path d="M243.4 102.5h6l-3 3.2z" fill="#777"/>
<text x="264" y="107" font-family="Liberation Sans,sans-serif" font-size="13.500" fill="#555" stroke="#555" stroke-width="0.400" text-anchor="middle">A</text>
<path d="M256 108h16v4h-16z" fill="#ff0000"/>
<path d="M277.4 102.5h6l-3 3.2z" fill="#777"/>
<path d="M279.5 137.5v-5h5M282.5 135.5l3 3M286 135.5v3.5h-3.5" fill="none" stroke="#777" stroke-width="1"/>
<path d="M318 62h22v23h-22z" fill="#9fd5b7"/>
<path d="M300 65.5H314" stroke="#555" stroke-width="1"/>
<path d="M300 68.5H314" stroke="#555" stroke-width="1"/>
<path d="M300 71.5H314" stroke="#555" stroke-width="1"/>
<path d="M322 69.5H336" stroke="#555" stroke-width="1"/>
<path d="M322 72.5H336" stroke="#555" stroke-width="1"/>
<path d="M322 75.5H336" stroke="#555" stroke-width="1"/>
<path d="M344 74.5H358" stroke="#555" stroke-width="1"/>
<path d="M344 77.5H358" stroke="#555" stroke-width="1"/>
<path d="M344 80.5H358" stroke="#555" stroke-width="1"/>
<path d="M300 99.5H314" stroke="#555" stroke-width="1"/>
<path d="M300 102.5H310" stroke="#555" stroke-width="1"/>
<path d="M300 105.5H314" stroke="#555" stroke-width="1"/>
<path d="M300 108.5H310" stroke="#555" stroke-width="1"/>
<path d="M322 99.5H336" stroke="#555" stroke-width="1"/>
<path d="M324.5 102.5H333.5" stroke="#555" stroke-width="1"/>
<path d="M322 105.5H336" stroke="#555" stroke-width="1"/>
<path d="M324.5 108.5H333.5" stroke="#555" stroke-width="1"/>
<path d="M344 99.5H358" stroke="#555" stroke-width="1"/>
<path d="M348 102.5H358" stroke="#555" stroke-width="1"/>
<path d="M344 105.5H358" stroke="#555" stroke-width="1"/>
<path d="M348 108.5H358" stroke="#555" stroke-width="1"/>
<path d="M366.5 62v21.5M366.5 93v21.5M419.5 61v55" stroke="#e1e1e1"/>
<text transform="translate(378,78.500) rotate(-45)" font-family="Liberation Sans,sans-serif" font-size="10.500" fill="#444">ab</text>
<path d="M380.500 79.500l9.300-9.300M386.300 70h3.700v3.700" stroke="#444" stroke-width="0.900" fill="none"/>
<path d="M393.5 71.5h6l-3 3.2z" fill="#777"/>
<path d="M376 99.5H380" stroke="#555" stroke-width="1"/>
<path d="M381.2 99.5H390" stroke="#555" stroke-width="1"/>
<path d="M381.2 102.5H390" stroke="#555" stroke-width="1"/>
<path d="M381.2 105.5H387" stroke="#555" stroke-width="1"/>
<path d="M376 108.5H380" stroke="#555" stroke-width="1"/>
<path d="M381.2 108.5H390" stroke="#555" stroke-width="1"/>
<path d="M374.2 104l3.300-3v1.800h3.700v2.400h-3.700v1.800z" fill="#3b78c0"/>
<path d="M398 99.5H402" stroke="#555" stroke-width="1"/>
<path d="M403.2 99.5H412" stroke="#555" stroke-width="1"/>
<path d="M403.2 102.5H412" stroke="#555" stroke-width="1"/>
<path d="M403.2 105.5H409" stroke="#555" stroke-width="1"/>
<path d="M398 108.5H402" stroke="#555" stroke-width="1"/>
<path d="M403.2 108.5H412" stroke="#555" stroke-width="1"/>
<path d="M402.8 104l-3.300-3v1.800h-3.500v2.400h3.500v1.800z" fill="#3b78c0"/>
<path d="M427.5 65.5h9v4h-9zM427.5 72.500h9v7h-9z" fill="#fff" stroke="#555"/>
<path d="M429.500 67.500h11.500M429.500 74.500h5.500M429.500 76.500h5.500" stroke="#3b78c0" stroke-width="1"/>
<path d="M442.300 70c0 2.500-1.500 3.500-4.800 3.500M439.500 71.200l-2.300 2.300 2.300 2.300" fill="none" stroke="#3b78c0" stroke-width="1.100"/>
<path d="M427.500 96.500h14v14h-14z" fill="#f3eef3" stroke="#b5b2b5"/><path d="M427.500 99.500h14M427.500 107.500h14M434.500 96.500v3M434.500 107.500v3" stroke="#b5b2b5" fill="none"/>
<path d="M429.500 103.500h10M431 102l-1.500 1.500 1.500 1.500M438 102l1.500 1.500-1.500 1.500" stroke="#aaa" fill="none"/>
<path d="M540.5 103.0h6l-3 3.2z" fill="#c0c0c0"/>
<path d="M543.5 137.5v-5h5M546.5 135.5l3 3M550 135.5v3.5h-3.5" fill="none" stroke="#777" stroke-width="1"/>
<path d="M560.5 62.5h130v22h-130z" fill="#fff" stroke="#ababab"/>
<path d="M680 72.3h6l-3 3.2z" fill="#666"/>
<text x="571" y="109.300" font-family="Liberation Sans,sans-serif" font-size="15.500" fill="#555" text-anchor="middle">$</text>
<path d="M584.4 103.0h6l-3 3.2z" fill="#777"/>
<text x="605" y="109" font-family="Liberation Sans,sans-serif" font-size="14" fill="#555" text-anchor="middle">%</text>
<text x="626" y="103.500" font-family="Liberation Serif,serif" font-size="20" font-weight="bold" fill="#555" text-anchor="middle">,</text>
<path d="M642.5 93v22" stroke="#e1e1e1"/>
<text x="664.5" y="102.5" font-family="Liberation Sans,sans-serif" font-size="8.500" fill="#555" text-anchor="end">.0</text><text x="664.5" y="109.5" font-family="Liberation Sans,sans-serif" font-size="8.500" fill="#555" text-anchor="end">.00</text>
<path d="M650 99.5h5.5M652.3 97.3l-2.3 2.2 2.3 2.2" stroke="#3b78c0" stroke-width="1.1" fill="none"/>
<text x="686.5" y="102.5" font-family="Liberation Sans,sans-serif" font-size="8.500" fill="#555" text-anchor="end">.00</text><text x="686.5" y="109.5" font-family="Liberation Sans,sans-serif" font-size="8.500" fill="#555" text-anchor="end">.0</text>
<path d="M672 106.5h5.5M675.2 104.3l2.3 2.2-2.3 2.2" stroke="#3b78c0" stroke-width="1.1" fill="none"/>
<path d="M683.9 137.5v-5h5M686.9 135.5l3 3M690.4 135.5v3.5h-3.5" fill="none" stroke="#777" stroke-width="1"/>
<path d="M722.5 59.5h27v24h-27z" fill="#fff" stroke="#999"/><path d="M722.5 65.5h27M722.5 71.5h27M722.5 77.5h27M729.5 59.5v24M742.5 59.5v24" stroke="#bbb" fill="none"/>
<path d="M730 60h5v5h-5zM730 72h8v5h-8z" fill="#d9623e"/><path d="M730 66h10.5v5H730zM730 78h4.5v5H730z" fill="#3f7dc0"/>
<path d="M736.5 76.5h15v11.5h-15z" fill="#fff" stroke="#666"/>
<text x="744.300" y="87" font-family="DejaVu Sans,sans-serif" font-size="12.500" fill="#333" text-anchor="middle">≠</text>
<path d="M763.2 115.0h6l-3 3.2z" fill="#666"/>
<path d="M787.5 61.5h24v20h-24z" fill="#fff" stroke="#999"/><path d="M794 67h17.5v14.5H794z" fill="#b9d0ea"/><path d="M787.5 66.5h24M787.5 71.5h24M787.5 76.5h24M793.5 61.5v20M799.5 61.5v20M805.5 61.5v20" stroke="#aaa" fill="none"/>
<path d="M808.1 75.4l7.900-8.900v6.500l-4.700 5.500z" fill="#777" stroke="#fff" stroke-width="0.700"/>
<path d="M805.3 78.1l2.100-2.100 3.400 3.400-2.100 2.100z" fill="#777" stroke="#fff" stroke-width="0.700"/>
<path d="M793.5 88.5c5-1.500 6.500-7.800 10-9.300 3.600-1.200 6.300 2.500 4.700 5.700-1.600 3.300-8.200 4.100-14.700 3.600z" fill="#3f7dc0" stroke="#fff" stroke-width="0.700"/>
<ellipse cx="803.7" cy="83.3" rx="1.900" ry="1.200" fill="#fff" transform="rotate(-40 803.7 83.3)"/>
<path d="M812.7 115.0h6l-3 3.2z" fill="#666"/>
<path d="M837.5 59.5h25v20h-25z" fill="#fff" stroke="#999"/><path d="M837.5 64.5h25M837.5 74.5h25M842.5 59.5v20M856.5 59.5v20" stroke="#aaa" fill="none"/><path d="M843 65h13v9h-13z" fill="#b9d0ea"/>
<path d="M858.3000000000001 73.2l7.900-8.900v6.500l-4.700 5.500z" fill="#777" stroke="#fff" stroke-width="0.700"/>
<path d="M855.5 75.89999999999999l2.100-2.100 3.400 3.400-2.100 2.100z" fill="#777" stroke="#fff" stroke-width="0.700"/>
<path d="M843.7 86.3c5-1.500 6.500-7.800 10-9.300 3.600-1.200 6.300 2.500 4.700 5.700-1.600 3.300-8.200 4.100-14.700 3.600z" fill="#3f7dc0" stroke="#fff" stroke-width="0.700"/>
<ellipse cx="853.9000000000001" cy="81.1" rx="1.900" ry="1.200" fill="#fff" transform="rotate(-40 853.9000000000001 81.1)"/>
<path d="M863.5 115.0h6l-3 3.2z" fill="#666"/>
<path d="M889.5 59.5h14v5h-14zM889.5 75.5h14v10h-14z" fill="#f5f1f5" stroke="#c4c1c4"/><path d="M900.5 67.500h14v5h-14z" fill="#dedade" stroke="#c4c1c4"/><path d="M896.5 59.5v5M896.5 75.5v10M889.5 80.5h14M907.5 67.5v5" stroke="#c4c1c4" fill="none"/>
<path d="M890.500 70h6.500M893.500 67.300l-2.800 2.700 2.800 2.700" stroke="#b0b0b0" stroke-width="1.500" fill="none"/>
<path d="M898.4 113.8h6l-3 3.2z" fill="#666"/>
<path d="M930.5 59.5h14v5h-14zM930.5 76.5h14v10h-14z" fill="#f5f1f5" stroke="#c4c1c4"/><path d="M936.5 67.500h9v5h-9z" fill="#dedade" stroke="#c4c1c4"/><path d="M937.5 59.5v5M937.5 76.5v10M930.5 81.5h14" stroke="#c4c1c4" fill="none"/>
<path d="M945 65.500l13.500 11.500M959 65l-14.500 12" stroke="#c6c6c6" stroke-width="2" fill="none"/>
<path d="M940.4 113.8h6l-3 3.2z" fill="#c0c0c0"/>
<path d="M972.500 58v5M994.500 58v5M974.500 60.500h18M977.200 58.200l-2.500 2.300 2.500 2.300M989.800 58.200l2.500 2.300-2.500 2.300" stroke="#3f7dc0" stroke-width="1" fill="none"/>
<path d="M972.500 64.500h27v20h-27z" fill="#fff" stroke="#777"/><path d="M972.500 84.500v3.500h6.500l1.500-3.500M981.500 84.500v3.500h7l2.500-3.500" fill="#fff" stroke="#777"/><path d="M972.500 69.500h27M972.500 79.500h27M979.500 64.500v20M987.500 64.500v20M994.500 64.500v20" stroke="#aaa" fill="none"/>
<path d="M980 70h7v9h-7z" fill="#3f7dc0"/>
<path d="M983.3 113.8h6l-3 3.2z" fill="#666"/>
<path d="M1034 60.300v-2.100h-12.500l6.800 6.300-6.800 6.300h12.500v-2.100" fill="none" stroke="#a3a3a3" stroke-width="2"/>
<path d="M1041.5 63.8h6l-3 3.2z" fill="#666"/>
<path d="M1021.500 80.500h13v15h-13z" fill="#fff" stroke="#777"/><path d="M1021 81.500h14" stroke="#777" stroke-width="3"/><path d="M1028 85.300v7.200M1024.500 89.300l3.500 3.500 3.500-3.500" stroke="#2f6fb5" stroke-width="1.900" fill="none"/>
<path d="M1039.5 86.9h6l-3 3.2z" fill="#666"/>
<path d="M1030.600 103.800l3.200 4.400-8.800 8.300-3.700-4.100z" fill="#e8859a" stroke="#e8859a" stroke-width="1" stroke-linejoin="round"/><path d="M1023.300 110.200l3.800 4.200" stroke="#fff" stroke-width="0.900"/><path d="M1025.500 116.500h9.500" stroke="#777"/>
<path d="M1039.5 109.5h6l-3 3.2z" fill="#666"/>
<text x="1063.600" y="71.400" font-family="Liberation Sans,sans-serif" font-size="15.500" fill="#3b78c0" stroke="#3b78c0" stroke-width="0.500" text-anchor="middle">A</text>
<text x="1063.800" y="85.600" font-family="Liberation Sans,sans-serif" font-size="15.500" fill="#9b57b3" stroke="#9b57b3" stroke-width="0.500" text-anchor="middle">Z</text>
<path d="M1070.200 67.400h16.600l-7 7v7.300h-2.900v-7.300z" fill="#777"/><path d="M1072.500 68.600l5.200 5.400v7" stroke="#fff" stroke-width="0.800" fill="none"/>
<path d="M1084.5 115.0h6l-3 3.2z" fill="#666"/>
<path d="M1109 61h4v3h2v5h-1.200v5h0v10h-10.800v-11h2v-4h2v-5h2zM1123 61h-4v3h-2v5h1.200v5h0v10h10.800v-11h-2v-4h-2v-5h-2z" fill="#6a6a6a"/><path d="M1113.800 69h4.400v4.800h-4.400z" fill="#6a6a6a"/>
<path d="M1104.500 74v9M1106.500 70v3M1108.500 65v4M1110.500 62v2M1127.500 74v9M1125.500 70v3M1123.500 65v4M1121.500 62v2" stroke="#fff" stroke-width="0.900"/><path d="M1115 71.400h2" stroke="#fff" stroke-width="0.800"/>
<path d="M1129.5 115.0h6l-3 3.2z" fill="#666"/>
<path d="M1192 137.500l4.300-4.300 4.300 4.300" stroke="#555" stroke-width="1.600" fill="none"/>
<path d="M84.500 55v84M291.500 55v84M555.500 55v84M696.500 55v84M876.500 55v84M1012.500 55v84M1142.500 55v84" stroke="#dadada"/>
<path d="M92 165.5h6l-3 3.2z" fill="#666"/>
<path d="M120.500 163v2M120.500 167v2M120.500 171v2" stroke="#999"/>
<path d="M150 162.500l8 8M158 162.500l-8 8" stroke="#b0b0b0" stroke-width="1.300"/>
<path d="M186 167l3 3.500 6-8" stroke="#b0b0b0" stroke-width="1.600" fill="none"/>
<text x="222" y="171" font-family="Liberation Serif,serif" font-size="13" font-style="italic" font-weight="bold" fill="#555">f</text><text x="227" y="171.500" font-family="Liberation Serif,serif" font-size="9" font-style="italic" font-weight="bold" fill="#555">x</text>
<path d="M1193.500 165.500l3.500 3.500 3.500-3.500" stroke="#555" stroke-width="1.600" fill="none"/></svg>
<div class="t" style="left:404.0px;top:4.7px;font:normal 12px/16px 'Liberation Sans',sans-serif;color:#444;transform:scaleX(0.966)">Danh sach hang hoa kiem ke_xuat khau (2).xls</div>
<div class="t" style="left:651.7px;top:4.7px;font:normal 12px/16px 'Liberation Sans',sans-serif;color:#444;transform:scaleX(1.025)">[Compatibility Mode] - Excel</div>
<div class="t" style="left:18.3px;top:31.1px;font:normal 12px/16px 'Liberation Sans',sans-serif;color:#fff;transform:scaleX(0.817)">FILE</div>
<div class="t" style="left:75.3px;top:31.1px;font:normal 12px/16px 'Liberation Sans',sans-serif;color:#217346;transform:scaleX(0.964)">HOME</div>
<div class="t" style="left:139.3px;top:31.1px;font:normal 12px/16px 'Liberation Sans',sans-serif;color:#444;transform:scaleX(0.831)">INSERT</div>
<div class="t" style="left:204.0px;top:31.1px;font:normal 12px/16px 'Liberation Sans',sans-serif;color:#444;transform:scaleX(0.896)">PAGE LAYOUT</div>
<div class="t" style="left:307.3px;top:31.1px;font:normal 12px/16px 'Liberation Sans',sans-serif;color:#444;transform:scaleX(0.910)">FORMULAS</div>
<div class="t" style="left:397.3px;top:31.1px;font:normal 12px/16px 'Liberation Sans',sans-serif;color:#444;transform:scaleX(0.906)">DATA</div>
<div class="t" style="left:454.0px;top:31.1px;font:normal 12px/16px 'Liberation Sans',sans-serif;color:#444;transform:scaleX(0.845)">REVIEW</div>
<div class="t" style="left:523.3px;top:31.1px;font:normal 12px/16px 'Liberation Sans',sans-serif;color:#444;transform:scaleX(0.871)">VIEW</div>
<div class="t" style="left:579.3px;top:31.1px;font:normal 12px/16px 'Liberation Sans',sans-serif;color:#444;transform:scaleX(0.873)">LOAD TEST</div>
<div class="t" style="left:666.7px;top:31.1px;font:normal 12px/16px 'Liberation Sans',sans-serif;color:#444;transform:scaleX(0.879)">TEAM</div>
<div class="t" style="left:1054.4px;top:29.6px;font:normal 12px/16px 'Liberation Sans',sans-serif;color:#444;transform:scaleX(0.942)">HUONG LE THI MAI</div>
<div class="t" style="left:10.5px;top:92.0px;font:normal 12px/16px 'Liberation Sans',sans-serif;color:#a6a6a6;transform:scaleX(0.912)">Paste</div>
<div class="t" style="left:8.5px;top:127.0px;font:normal 12px/16px 'Liberation Sans',sans-serif;color:#666;transform:scaleX(0.983)">Clipboard</div>
<div class="t" style="left:92.7px;top:65.5px;font:normal 12px/16px 'Liberation Sans',sans-serif;color:#000;transform:scaleX(0.962)">Times New Roma</div>
<div class="t" style="left:203.6px;top:65.5px;font:normal 12px/16px 'Liberation Sans',sans-serif;color:#000;transform:scaleX(0.834)">11</div>
<div class="t" style="left:168.5px;top:127.0px;font:normal 12px/16px 'Liberation Sans',sans-serif;color:#666;transform:scaleX(0.979)">Font</div>
<div class="t" style="left:446.0px;top:65.8px;font:normal 12px/16px 'Liberation Sans',sans-serif;color:#444;transform:scaleX(0.971)">Wrap Text</div>
<div class="t" style="left:446.0px;top:96.5px;font:normal 12px/16px 'Liberation Sans',sans-serif;color:#a6a6a6;transform:scaleX(1.004)">Merge &amp; Center</div>
<div class="t" style="left:389.0px;top:127.0px;font:normal 12px/16px 'Liberation Sans',sans-serif;color:#666;transform:scaleX(0.993)">Alignment</div>
<div class="t" style="left:563.8px;top:65.5px;font:normal 12px/16px 'Liberation Sans',sans-serif;color:#000;transform:scaleX(0.906)">General</div>
<div class="t" style="left:597.5px;top:127.0px;font:normal 12px/16px 'Liberation Sans',sans-serif;color:#666;transform:scaleX(0.949)">Number</div>
<div class="t" style="left:705.0px;top:92.0px;font:normal 12px/16px 'Liberation Sans',sans-serif;color:#444;transform:scaleX(1.028)">Conditional</div>
<div class="t" style="left:703.0px;top:108.0px;font:normal 12px/16px 'Liberation Sans',sans-serif;color:#444;transform:scaleX(1.011)">Formatting</div>
<div class="t" style="left:774.5px;top:92.0px;font:normal 12px/16px 'Liberation Sans',sans-serif;color:#444;transform:scaleX(0.953)">Format as</div>
<div class="t" style="left:784.0px;top:108.0px;font:normal 12px/16px 'Liberation Sans',sans-serif;color:#444;transform:scaleX(0.906)">Table</div>
<div class="t" style="left:840.5px;top:92.0px;font:normal 12px/16px 'Liberation Sans',sans-serif;color:#444;transform:scaleX(0.943)">Cell</div>
<div class="t" style="left:831.0px;top:108.0px;font:normal 12px/16px 'Liberation Sans',sans-serif;color:#444;transform:scaleX(0.912)">Styles</div>
<div class="t" style="left:771.5px;top:127.0px;font:normal 12px/16px 'Liberation Sans',sans-serif;color:#666;transform:scaleX(0.857)">Styles</div>
<div class="t" style="left:887.3px;top:92.0px;font:normal 12px/16px 'Liberation Sans',sans-serif;color:#444;transform:scaleX(0.953)">Insert</div>
<div class="t" style="left:927.8px;top:92.0px;font:normal 12px/16px 'Liberation Sans',sans-serif;color:#a6a6a6;transform:scaleX(0.928)">Delete</div>
<div class="t" style="left:967.7px;top:92.0px;font:normal 12px/16px 'Liberation Sans',sans-serif;color:#444;transform:scaleX(0.981)">Format</div>
<div class="t" style="left:932.5px;top:127.0px;font:normal 12px/16px 'Liberation Sans',sans-serif;color:#666;transform:scaleX(0.862)">Cells</div>
<div class="t" style="left:1056.0px;top:92.0px;font:normal 12px/16px 'Liberation Sans',sans-serif;color:#444;transform:scaleX(1.010)">Sort &amp;</div>
<div class="t" style="left:1056.0px;top:108.0px;font:normal 12px/16px 'Liberation Sans',sans-serif;color:#444;transform:scaleX(0.964)">Filter</div>
<div class="t" style="left:1098.0px;top:92.0px;font:normal 12px/16px 'Liberation Sans',sans-serif;color:#444;transform:scaleX(1.029)">Find &amp;</div>
<div class="t" style="left:1096.0px;top:108.0px;font:normal 12px/16px 'Liberation Sans',sans-serif;color:#444;transform:scaleX(0.920)">Select</div>
<div class="t" style="left:1059.5px;top:127.0px;font:normal 12px/16px 'Liberation Sans',sans-serif;color:#666;transform:scaleX(0.981)">Editing</div>
<div class="t" style="left:11.5px;top:159.0px;font:normal 12px/16px 'Liberation Sans',sans-serif;color:#444;transform:scaleX(0.953)">K9</div>
<div class="t" style="left:112.0px;top:815.5px;font:bold 13px/16px 'Liberation Sans',sans-serif;color:#217346;transform:scaleX(0.990)">Danh sách hàng hóa kiểm kê</div>
<div class="t" style="left:27.2px;top:252.0px;font:normal 12px/16px 'DejaVu Sans','Liberation Sans',sans-serif;color:#111;transform:scaleX(0.897)"><b>MShopKeeper:</b></div>
<div class="t" style="left:27.2px;top:267.0px;font:normal 12px/16px 'DejaVu Sans','Liberation Sans',sans-serif;color:#111;transform:scaleX(0.927)"><b>Không bắt buộc</b> nhập đồng thời cột <b>Mã vạch</b> và cột <b>Mã SKU</b>.</div>
<div class="t" style="left:27.2px;top:282.0px;font:normal 12px/16px 'DejaVu Sans','Liberation Sans',sans-serif;color:#111;transform:scaleX(0.922)">+ Bỏ trống cột Mã SKU nếu nhập cột Mã vạch</div>
<div class="t" style="left:27.2px;top:296.6px;font:normal 12px/16px 'DejaVu Sans','Liberation Sans',sans-serif;color:#111;transform:scaleX(0.922)">+ Bỏ trống cột Mã vạch nếu nhập cột Mã SKU</div>
<div class="t" style="left:27.2px;top:311.3px;font:normal 12px/16px 'DejaVu Sans','Liberation Sans',sans-serif;color:#111;transform:scaleX(0.928)">Nếu muốn nhập hàng hóa quản lý theo lô, Serial/IMEI, vui lòng chọn từ cột E đến cột G, nhấn chuột phải,</div>
<div class="t" style="height:12.2px;overflow:hidden;left:27.2px;top:326.2px;font:normal 12px/16px 'DejaVu Sans','Liberation Sans',sans-serif;color:#111;transform:scaleX(0.914)">chọn Unhide</div>
<div class="t" style="left:29.9px;top:344.5px;font:bold 16px/16px 'Liberation Serif',serif;color:#000;transform:scaleX(0.939)">Mã SKU <span class=red>(*)</span></div>
<div class="t" style="left:137.2px;top:344.5px;font:bold 16px/16px 'Liberation Serif',serif;color:#000;transform:scaleX(0.948)">Mã vạch <span class=red>(*)</span></div>
<div class="t" style="left:257.6px;top:344.5px;font:bold 16px/16px 'Liberation Serif',serif;color:#000;transform:scaleX(0.919)">Tên hàng hóa</div>
<div class="t" style="left:364.9px;top:344.5px;font:bold 16px/16px 'Liberation Serif',serif;color:#000;transform:scaleX(0.930)">Đơn vị tính</div>
<div class="t" style="left:446.4px;top:344.5px;font:bold 16px/16px 'Liberation Serif',serif;color:#000;transform:scaleX(0.942)">Số lô</div>
<div class="t" style="left:487.0px;top:344.5px;font:bold 16px/16px 'Liberation Serif',serif;color:#000;transform:scaleX(0.939)">Hạn sử dụng</div>
<div class="t" style="left:579.4px;top:344.5px;font:bold 16px/16px 'Liberation Serif',serif;color:#000;transform:scaleX(0.939)">Serial/IMEI</div>
<div class="t" style="left:666.1px;top:344.5px;font:bold 16px/16px 'Liberation Serif',serif;color:#000;transform:scaleX(0.927)">Nhóm hàng hóa</div>
<div class="t" style="left:861.0px;top:334.3px;font:bold 16px/16px 'Liberation Serif',serif;color:#000;transform:scaleX(0.929)">Số lượng</div>
<div class="t" style="left:777.7px;top:354.3px;font:bold 16px/16px 'Liberation Serif',serif;color:#000;transform:scaleX(0.970)">Theo sổ</div>
<div class="t" style="left:837.7px;top:354.3px;font:bold 16px/16px 'Liberation Serif',serif;color:#000;transform:scaleX(0.988)">Kiểm kê <span class=red>(*)</span></div>
<div class="t" style="left:924.7px;top:354.3px;font:bold 16px/16px 'Liberation Serif',serif;color:#000;transform:scaleX(0.952)">Chênh lệch</div>
<div class="t" style="left:1008.9px;top:344.5px;font:bold 16px/16px 'Liberation Serif',serif;color:#000;transform:scaleX(0.934)">Nguyên nhân</div>
<div class="t" style="left:6.5px;top:841.0px;font:normal 11px/16px 'Liberation Sans',sans-serif;color:#fff;transform:scaleX(0.857)">READY</div>
<div class="t" style="left:1163.0px;top:841.0px;font:normal 11px/16px 'Liberation Sans',sans-serif;color:#fff;transform:scaleX(1.013)">100%</div>
<div style="left:25px;top:340px;width:612px;height:1px;background:#1f6e43"></div><div style="left:27px;top:341px;width:612px;height:2px;background:#000"></div>
<!-- window border -->
<div style="left:1210px;top:0;width:1px;height:838px;background:#c5dbcf"></div><div style="left:1211px;top:0;width:1px;height:859px;background:#217346"></div>
</body></html>
